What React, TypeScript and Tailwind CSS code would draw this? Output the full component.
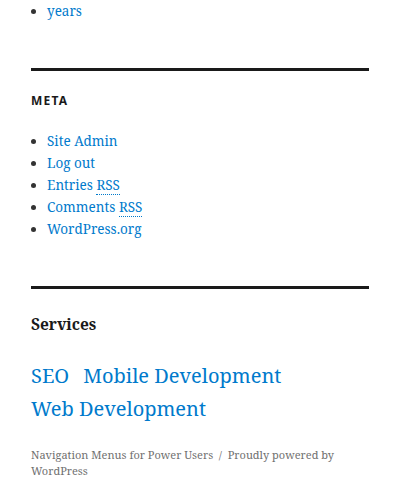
import React from "react";

const serif = { fontFamily: '"Noto Serif", "DejaVu Serif", serif' };

export default function App() {
  const link = "text-[#007acc]";
  return (
    <div className="w-[400px] h-[501px] bg-white overflow-hidden" style={serif}>
      <div className="px-[31px]">
        <ul className="list-disc pl-[16px] text-[13.5px] leading-[22px] text-[#333]">
          <li><span className={link}>years</span></li>
        </ul>
        <div className="mt-[46px] border-t-[3px] border-[#1a1a1a] pt-[20px]">
          <h2 className="text-[12px] font-bold uppercase tracking-[0.1em] leading-[20px] text-[#1a1a1a]" style={{ fontFamily: '"Noto Sans", sans-serif' }}>Meta</h2>
          <ul className="mt-[19px] list-disc pl-[16px] text-[13.5px] leading-[22px] text-[#333]">
            <li><span className={link}>Site Admin</span></li>
            <li><span className={link}>Log out</span></li>
            <li><span className={link}>Entries <abbr className="no-underline border-b border-dotted border-[#007acc]">RSS</abbr></span></li>
            <li><span className={link}>Comments <abbr className="no-underline border-b border-dotted border-[#007acc]">RSS</abbr></span></li>
            <li><span className={link}>WordPress.org</span></li>
          </ul>
        </div>
        <div className="mt-[46px] border-t-[3px] border-[#1a1a1a] pt-[22px]">
          <h2 className="text-[15.5px] font-bold leading-[26px] text-[#1a1a1a]">Services</h2>
          <div className="mt-[22px] text-[20px] leading-[33px] text-[#007acc]">
            <span className="mr-[14px]">SEO</span>
            <span>Mobile Development</span>
            <br />
            <span>Web Development</span>
          </div>
        </div>
        <p className="mt-[22px] text-[11px] leading-[16px] text-[#707070]">
          {"Navigation Menus for Power Users\u00a0\u00a0/\u00a0\u00a0Proudly powered by WordPress"}
        </p>
      </div>
    </div>
  );
}
